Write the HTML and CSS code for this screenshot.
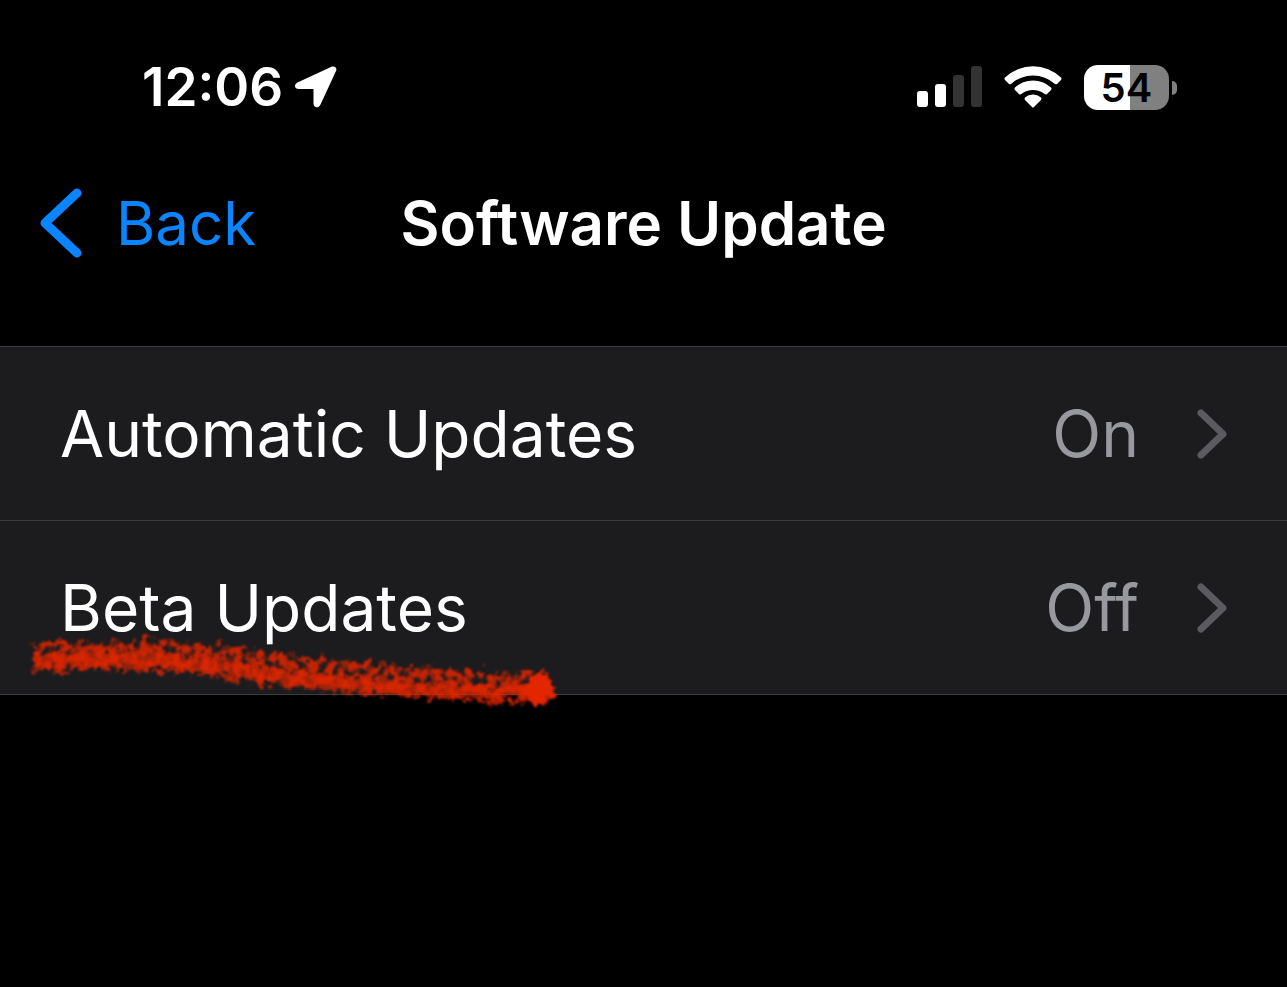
FILE: index.html
```html
<!DOCTYPE html>
<html lang="en">

<head>
  <meta charset="UTF-8">
  <meta name="viewport" content="width=device-width, initial-scale=1.0">
  <title>Software Update</title>
  <link rel="stylesheet" href="styles.css">
</head>

<body>
  <div class="status-bar">
    <div class="clock">
      <span>12:06</span>
      <svg width="42" height="42" viewBox="0 0 42 42" aria-hidden="true">
        <path d="M2.500 16.500 36.500 .8C39.500-.5 42.500 2 41 5L25.500 38.500C23.500 42.800 18.500 42 18.500 37.500V23H4C-.8 23-1.200 18.300 2.500 16.500Z" fill="#fff"/>
      </svg>
    </div>
    <div class="indicators">
      <svg width="65" height="42" viewBox="0 0 65 42" aria-hidden="true">
        <rect x="0" y="25" width="11" height="16" rx="3" fill="#fff"/>
        <rect x="18" y="18" width="11" height="23" rx="3" fill="#fff"/>
        <rect x="36" y="9" width="11" height="32" rx="3" fill="#333"/>
        <rect x="54" y="0" width="11" height="41" rx="3" fill="#333"/>
      </svg>
      <svg width="58" height="42" viewBox="0 0 58 42" aria-hidden="true">
        <path d="M1 11.500A40.500 40.500 0 0 1 57 11.500Q58 12.700 57 14L53 18Q52 18.700 51 17.900A33 33 0 0 0 7 17.900Q6 18.700 5 18L1 14Q0 12.700 1 11.500Z" fill="#fff"/>
        <path d="M11 21.500A26.500 26.500 0 0 1 47 21.500Q48 22.700 47 24L42.800 28.200Q41.800 29 40.700 28.100A18.500 18.500 0 0 0 17.300 28.100Q16.200 29 15.200 28.200L11 24Q10 22.700 11 21.500Z" fill="#fff"/>
        <path d="M21 31.500A12.500 12.500 0 0 1 37 31.500Q38 32.700 37 34L30 41Q29 42 28 41L21 34Q20 32.700 21 31.500Z" fill="#fff"/>
      </svg>
      <div class="battery"><span class="battery-level">54</span></div>
    </div>
  </div>

  <header class="nav">
    <a class="back" href="#">
      <svg width="42" height="70" viewBox="0 0 42 70" aria-hidden="true">
        <path d="M37 5 5 35l32 30" fill="none" stroke="#0a84ff" stroke-width="9" stroke-linecap="round" stroke-linejoin="round"/>
      </svg>
      <span>Back</span>
    </a>
    <h1>Software Update</h1>
  </header>

  <main class="list">
    <a class="row" href="#">
      <span class="label">Automatic Updates</span>
      <span class="value">On</span>
      <svg class="chevron" width="30" height="50" viewBox="0 0 30 50" aria-hidden="true">
        <path d="M4 4l22 21L4 46" />
      </svg>
    </a>
    <a class="row" href="#">
      <span class="label">Beta Updates</span>
      <span class="value">Off</span>
      <svg class="chevron" width="30" height="50" viewBox="0 0 30 50" aria-hidden="true">
        <path d="M4 4l22 21L4 46" />
      </svg>
      <svg class="marker" width="536" height="84" viewBox="0 0 536 84" aria-hidden="true">
        <defs>
          <filter id="crayon" x="0" y="0" width="536" height="84" filterUnits="userSpaceOnUse" color-interpolation-filters="sRGB">
            <feTurbulence type="fractalNoise" baseFrequency="0.13" numOctaves="3" seed="4" result="noise"/>
            <feDisplacementMap in="SourceGraphic" in2="noise" scale="22" xChannelSelector="R" yChannelSelector="G" result="rough"/>
            <feColorMatrix in="noise" type="matrix" values="0 0 0 0 0  0 0 0 0 0  0 0 0 0 0  0 0 4 0 -1.3" result="grain"/>
            <feComposite in="rough" in2="grain" operator="in" result="chalk"/>
            <feGaussianBlur in="chalk" stdDeviation="1"/>
          </filter>
          <filter id="edge" x="0" y="0" width="536" height="84" filterUnits="userSpaceOnUse" color-interpolation-filters="sRGB">
            <feTurbulence type="fractalNoise" baseFrequency="0.16" numOctaves="2" seed="9" result="noise"/>
            <feDisplacementMap in="SourceGraphic" in2="noise" scale="16" xChannelSelector="R" yChannelSelector="G" result="rough"/>
            <feGaussianBlur in="rough" stdDeviation="1"/>
          </filter>
        </defs>
        <path filter="url(#crayon)" fill="#e32600" fill-opacity=".85" d="M7 12 70 11 142 9 202 15 272 24 342 32 402 36 472 43 500 42 524 42 523 73 472 71 402 67 342 63 272 57 202 48 142 40 72 40 8 41Z"/>
        <path filter="url(#edge)" fill="none" stroke="#e32600" stroke-opacity=".65" stroke-width="13" d="M10 30 72 28 142 29 202 38 272 48 342 55 402 59 472 62 510 60"/>
        <circle filter="url(#edge)" cx="513" cy="58" r="15" fill="#e32600"/>
      </svg>
    </a>
  </main>
</body>

</html>
```
FILE: styles.css
```css
* {
  margin: 0;
  padding: 0;
  box-sizing: border-box;
}

body {
  min-height: 100vh;
  background-color: #000;
  color: #fff;
  font-family: Inter, "Liberation Sans", sans-serif;
}

a {
  color: inherit;
  text-decoration: none;
}

svg {
  display: block;
  flex: none;
}

.status-bar {
  display: flex;
  justify-content: space-between;
  align-items: center;
  height: 174px;
  padding: 0 110px 0 142px;
}

.clock {
  display: flex;
  align-items: center;
  gap: 12px;
  font-size: 53px;
  font-weight: 600;
}

.indicators {
  display: flex;
  align-items: center;
  gap: 22px;
}

.battery {
  position: relative;
  padding-right: 8px;
}

.battery-level {
  display: block;
  width: 85px;
  border-radius: 14px;
  background: linear-gradient(to right, #fff 54%, #808080 54%);
  color: #000;
  font-size: 40px;
  font-weight: 600;
  line-height: 45px;
  text-align: center;
}

.battery::after {
  content: "";
  position: absolute;
  right: 0;
  top: 16px;
  width: 5px;
  height: 14px;
  border-radius: 0 5px 5px 0;
  background-color: #808080;
}

.nav {
  display: grid;
  grid-template-columns: 1fr auto 1fr;
  align-items: center;
  height: 172px;
  padding: 0 40px 74px;
}

.back {
  display: flex;
  align-items: center;
  gap: 34px;
  color: #0a84ff;
  font-size: 60px;
}

.nav h1 {
  font-size: 60px;
  font-weight: 600;
}

.list {
  border-top: 1px solid #3d3d40;
  background-color: #1c1c1e;
}

.row {
  position: relative;
  display: flex;
  align-items: center;
  height: 174px;
  padding: 0 60px;
  border-bottom: 1px solid #3d3d40;
  font-size: 64px;
}

.label {
  flex: 1;
}

.value {
  color: #98989f;
}

.chevron {
  margin-left: 58px;
  fill: none;
  stroke: #5a5a5f;
  stroke-width: 7;
  stroke-linecap: round;
  stroke-linejoin: round;
}

.marker {
  position: absolute;
  left: 26px;
  top: 110px;
}
```
